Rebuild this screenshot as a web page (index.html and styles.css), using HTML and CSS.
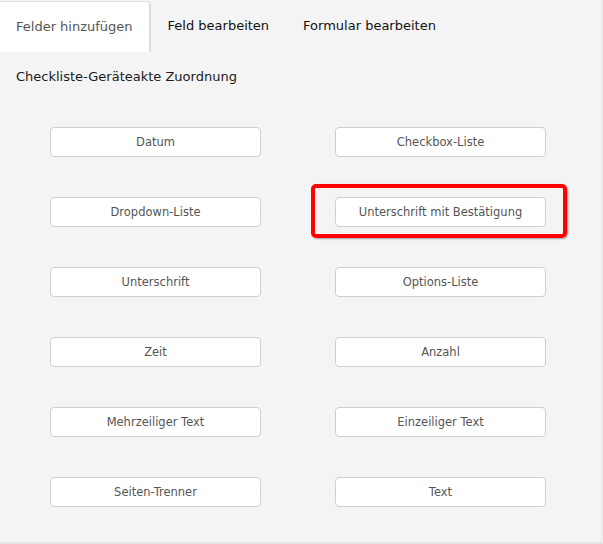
FILE: index.html
```html
<!DOCTYPE html>
<html lang="de">
<head>
<meta charset="utf-8">
<title>Felder hinzufügen</title>
<link rel="stylesheet" href="styles.css">
</head>
<body>
<div class="page">
  <nav class="tabs">
    <div class="tab active">Felder hinzufügen</div>
    <div class="tab">Feld bearbeiten</div>
    <div class="tab">Formular bearbeiten</div>
  </nav>
  <section class="panel">
    <h2 class="title">Checkliste-Geräteakte Zuordnung</h2>
    <div class="grid">
      <button class="field">Datum</button>
      <button class="field">Checkbox-Liste</button>
      <button class="field">Dropdown-Liste</button>
      <div class="highlight-wrap">
        <button class="field">Unterschrift mit Bestätigung</button>
        <span class="highlight"></span>
      </div>
      <button class="field">Unterschrift</button>
      <button class="field">Options-Liste</button>
      <button class="field">Zeit</button>
      <button class="field">Anzahl</button>
      <button class="field">Mehrzeiliger Text</button>
      <button class="field">Einzeiliger Text</button>
      <button class="field">Seiten-Trenner</button>
      <button class="field">Text</button>
    </div>
  </section>
</div>
</body>
</html>
```

FILE: styles.css
```css
html, body {
  margin: 0;
  padding: 0;
  background: #f4f4f4;
}
body {
  font-family: "DejaVu Sans", Verdana, sans-serif;
  color: #222;
  width: 603px;
  height: 544px;
  overflow: hidden;
}
.page {
  width: 601px;
  height: 542px;
  border-bottom: 2px solid #e4e4e4;
  border-right: 2px solid #ececec;
}
.tabs {
  display: flex;
  height: 52px;
  align-items: stretch;
}
.tab {
  display: flex;
  align-items: center;
  padding: 0 17px 2px;
  font-size: 13px;
  color: #111;
}
.tab.active {
  background: #fff;
  color: #555;
  margin-top: 1px;
  padding: 0 16px 2px;
  border-top: 1px solid #e2e2e2;
  border-right: 2px solid #dcdcdc;
  border-radius: 0 4px 0 0;
}
.panel {
  padding: 15px 0 0 0;
}
.title {
  margin: 0 0 0 16px;
  font-size: 13px;
  font-weight: normal;
  line-height: 20px;
  color: #1a1a1a;
}
.grid {
  display: grid;
  grid-template-columns: 211px 211px;
  column-gap: 74px;
  row-gap: 40px;
  margin: 40px 0 0 50px;
}
.field {
  display: block;
  width: 211px;
  height: 30px;
  margin: 0;
  padding: 0;
  background: #fff;
  border: 1px solid #cfcfcf;
  border-radius: 4px;
  font-family: "DejaVu Sans", Verdana, sans-serif;
  font-size: 11.5px;
  color: #555;
  text-align: center;
  cursor: pointer;
}
.highlight-wrap {
  position: relative;
}
.highlight {
  position: absolute;
  left: -24px;
  top: -13px;
  width: 248px;
  height: 46px;
  border: 4px solid #ff0000;
  border-radius: 5px;
  box-shadow: 1px 1px 2px rgba(0, 0, 0, 0.35);
  pointer-events: none;
}
```
